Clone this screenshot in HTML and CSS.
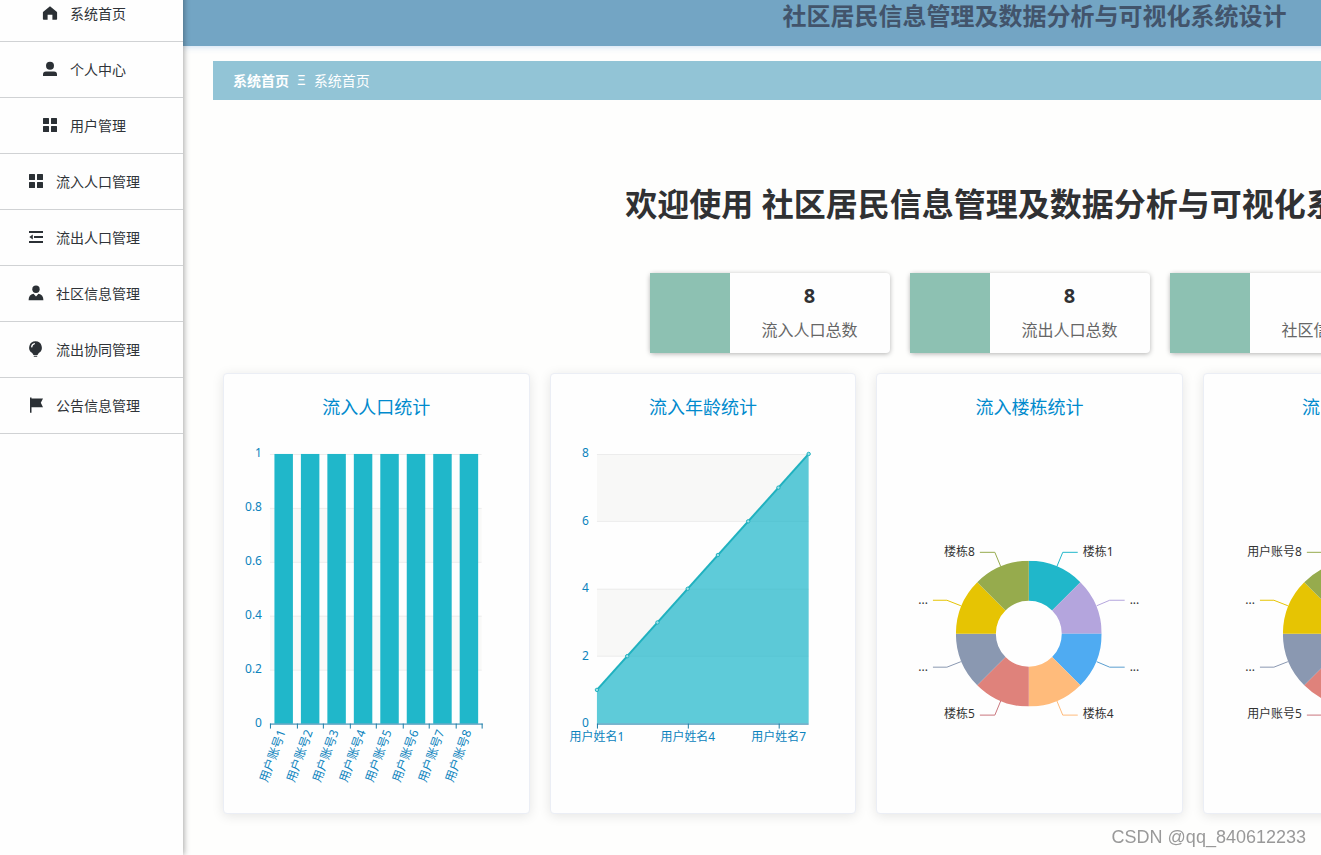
FILE: index.html
```html
<!DOCTYPE html>
<html lang="zh-CN">
<head>
<meta charset="utf-8">
<title>社区居民信息管理及数据分析与可视化系统设计</title>
<link rel="stylesheet" href="styles.css">
</head>
<body>
<svg class="defs" aria-hidden="true">
  <symbol id="i-grid" viewBox="0 0 16 16"><path d="M1.6 1h4.8q.6 0 .6.6v4.8q0 .6-.6.6H1.600q-.6 0-.6-.6V1.600q0-.6.6-.6zM9.600 1h4.800q.6 0 .6.6v4.800q0 .6-.6.6H9.600q-.6 0-.6-.6V1.600q0-.6.6-.6zM1.600 9h4.800q.6 0 .6.6v4.800q0 .6-.6.6H1.600q-.6 0-.6-.6V9.600q0-.6.6-.6zM9.600 9h4.800q.6 0 .6.6v4.800q0 .6-.6.6H9.600q-.6 0-.6-.6V9.600q0-.6.6-.6z"/></symbol>
  <symbol id="donut" viewBox="0 0 146 146">
    <path fill="#20b7ca" d="M73 0A73 73 0 0 1 124.620 21.380L96.330 49.670A33 33 0 0 0 73 40z"/>
    <path fill="#b4a5dd" d="M124.620 21.380A73 73 0 0 1 146 73L106 73A33 33 0 0 0 96.330 49.670z"/>
    <path fill="#4fabf2" d="M146 73A73 73 0 0 1 124.620 124.620L96.330 96.330A33 33 0 0 0 106 73z"/>
    <path fill="#ffbb7b" d="M124.620 124.620A73 73 0 0 1 73 146L73 106A33 33 0 0 0 96.330 96.330z"/>
    <path fill="#df827b" d="M73 146A73 73 0 0 1 21.380 124.620L49.670 96.330A33 33 0 0 0 73 106z"/>
    <path fill="#8a98b1" d="M21.380 124.620A73 73 0 0 1 0 73L40 73A33 33 0 0 0 49.670 96.330z"/>
    <path fill="#e6c403" d="M0 73A73 73 0 0 1 21.380 21.380L49.670 49.670A33 33 0 0 0 40 73z"/>
    <path fill="#96ab4d" d="M21.380 21.380A73 73 0 0 1 73 0L73 40A33 33 0 0 0 49.670 49.670z"/>
  </symbol>
  <symbol id="leaders" viewBox="0 0 305 394">
    <g fill="none">
      <path stroke="#20b7ca" d="M180 147l6-14.500h15"/>
      <path stroke="#b4a5dd" d="M220 186l13-5.500h15"/>
      <path stroke="#5a9fd0" d="M220 242l13 5.500h15"/>
      <path stroke="#ffbb7b" d="M180 281l6 14.500h15"/>
      <path stroke="#c9757c" d="M124 281l-6 14.500h-15"/>
      <path stroke="#8a98b1" d="M84 242l-14 5.500h-14"/>
      <path stroke="#e6c403" d="M84 186l-14-5.500h-14"/>
      <path stroke="#96ab4d" d="M124 147l-6-14.500h-15"/>
    </g>
  </symbol>
</svg>
<div class="page">
  <nav class="sidebar">
    <ul class="menu">
      <li><a href="#"><svg class="icon" viewBox="0 0 16 16"><path d="M8 1.200L1.300 6.700q-.4.300-.4.900V14q0 .8.800.8h3.900V9.800h4.800v5h3.900q.8 0 .8-.8V7.600q0-.6-.4-.9z"/></svg>系统首页</a></li>
      <li><a href="#"><svg class="icon" viewBox="0 0 16 16"><circle cx="8" cy="4.800" r="4"/><path d="M1 15v-1.500Q1 10.500 4 10.500h8q3 0 3 3V15z"/></svg>个人中心</a></li>
      <li><a href="#"><svg class="icon"><use href="#i-grid"/></svg>用户管理</a></li>
      <li><a href="#"><svg class="icon"><use href="#i-grid"/></svg>流入人口管理</a></li>
      <li><a href="#"><svg class="icon" viewBox="0 0 16 16"><path d="M1 2h14v2H1zM6 7h9v2H6zM1 12h14v2H1zM4.800 5.600v4.800L1.300 8z"/></svg>流出人口管理</a></li>
      <li><a href="#"><svg class="icon" viewBox="0 0 16 16"><circle cx="8" cy="4.200" r="3.700"/><path d="M.6 15.300q0-5.600 4.900-6.500L8 11.600l2.500-2.800q4.900.9 4.900 6.500z"/></svg>社区信息管理</a></li>
      <li><a href="#"><svg class="icon" viewBox="0 0 16 16"><path fill-rule="evenodd" d="M7.500.3A6.300 6.300 0 0 1 10.800 12L9.500 14h-4L4.200 12A6.300 6.300 0 0 1 7.500.3zM6.800 2Q3.200 2.600 3 6.200l1.200.2Q4.500 3.700 7 3.100zM5.800 14.800h3.400v1H5.800z"/></svg>流出协同管理</a></li>
      <li><a href="#"><svg class="icon" viewBox="0 0 16 16"><path d="M2 .5h1.500v1H15L12.800 5.800 15 10.300H3.500v5.400H2z"/></svg>公告信息管理</a></li>
    </ul>
  </nav>
  <div class="body">
    <header class="header">社区居民信息管理及数据分析与可视化系统设计</header>
    <main class="main">
      <nav class="crumbs" aria-label="位置"><a href="#">系统首页</a><span class="sep">Ξ</span><span>系统首页</span></nav>
      <h1 class="welcome">欢迎使用 社区居民信息管理及数据分析与可视化系统设计</h1>
      <section class="stats">
        <div class="stat"><div class="swatch"></div><div class="info"><strong>8</strong><span>流入人口总数</span></div></div>
        <div class="stat"><div class="swatch"></div><div class="info"><strong>8</strong><span>流出人口总数</span></div></div>
        <div class="stat"><div class="swatch"></div><div class="info"><strong>8</strong><span>社区信息总数</span></div></div>
      </section>
      <section class="charts">
        <article class="card">
          <h2>流入人口统计</h2>
          <svg class="chart" viewBox="0 0 305 394">
            <path fill="#f9f9f8" d="M46 88h212v54H46zM46 196h212v54H46z"/>
            <path class="gridline" d="M46 34.500h212M46 88.500h212M46 142.500h212M46 196.500h212M46 250.500h212"/>
            <g fill="#20b7ca">
              <rect x="50.500" y="34" width="18.500" height="270"/><rect x="77" y="34" width="18.500" height="270"/><rect x="103.500" y="34" width="18.500" height="270"/><rect x="130" y="34" width="18.500" height="270"/><rect x="156.500" y="34" width="18.500" height="270"/><rect x="183" y="34" width="18.500" height="270"/><rect x="209.500" y="34" width="18.500" height="270"/><rect x="236" y="34" width="18.500" height="270"/>
            </g>
            <path class="axis" d="M46 304.500h213M46.500 304v5M73.500 304v5M99.500 304v5M126.500 304v5M152.500 304v5M179.500 304v5M205.500 304v5M232.500 304v5M258.500 304v5"/>
            <g class="label end"><text x="38" y="37">1</text><text x="38" y="91">0.8</text><text x="38" y="145">0.6</text><text x="38" y="199">0.4</text><text x="38" y="253">0.2</text><text x="38" y="307">0</text></g>
            <g class="label end">
              <text transform="translate(62 312) rotate(-70)">用户账号1</text>
              <text transform="translate(89 312) rotate(-70)">用户账号2</text>
              <text transform="translate(115 312) rotate(-70)">用户账号3</text>
              <text transform="translate(142 312) rotate(-70)">用户账号4</text>
              <text transform="translate(168 312) rotate(-70)">用户账号5</text>
              <text transform="translate(195 312) rotate(-70)">用户账号6</text>
              <text transform="translate(221 312) rotate(-70)">用户账号7</text>
              <text transform="translate(248 312) rotate(-70)">用户账号8</text>
            </g>
          </svg>
        </article>
        <article class="card">
          <h2>流入年龄统计</h2>
          <svg class="chart" viewBox="0 0 305 394">
            <path fill="#f8f8f7" d="M46 34h212v67.500H46zM46 169h212v67.500H46z"/>
            <path class="gridline" d="M46 34.500h212M46 101.500h212M46 169.500h212M46 236.500h212"/>
            <path fill="#20b7ca" fill-opacity=".72" d="M46 270.250L258 34V304H46z"/>
            <path class="axis" d="M46 304.500h212M46.500 304v5M137.500 304v5M228.500 304v5"/>
            <path fill="none" stroke="#20b1bf" stroke-width="2" d="M46 270.250L258 34"/>
            <g class="dots"><circle cx="46" cy="270.250" r="1.700"/><circle cx="76.300" cy="236.500" r="1.700"/><circle cx="106.600" cy="202.750" r="1.700"/><circle cx="136.900" cy="169" r="1.700"/><circle cx="167.100" cy="135.250" r="1.700"/><circle cx="197.400" cy="101.500" r="1.700"/><circle cx="227.700" cy="67.750" r="1.700"/><circle cx="258" cy="34" r="1.700"/></g>
            <g class="label end"><text x="38" y="37">8</text><text x="38" y="105">6</text><text x="38" y="172">4</text><text x="38" y="240">2</text><text x="38" y="307">0</text></g>
            <g class="label middle"><text x="46" y="321">用户姓名1</text><text x="137" y="321">用户姓名4</text><text x="228" y="321">用户姓名7</text></g>
          </svg>
        </article>
        <article class="card">
          <h2>流入楼栋统计</h2>
          <svg class="chart" viewBox="0 0 305 394">
            <use href="#donut" x="79" y="141" width="146" height="146"/>
            <use href="#leaders" width="305" height="394"/>
            <g class="label dark"><text x="206" y="136">楼栋1</text><text x="206" y="298">楼栋4</text><text x="253" y="184">...</text><text x="253" y="251">...</text></g>
            <g class="label dark end"><text x="98" y="136">楼栋8</text><text x="98" y="298">楼栋5</text><text x="51" y="184">...</text><text x="51" y="251">...</text></g>
          </svg>
        </article>
        <article class="card">
          <h2>流出人口统计</h2>
          <svg class="chart" viewBox="0 0 305 394">
            <use href="#donut" x="79" y="141" width="146" height="146"/>
            <use href="#leaders" width="305" height="394"/>
            <g class="label dark end"><text x="98" y="136">用户账号8</text><text x="98" y="298">用户账号5</text><text x="51" y="184">...</text><text x="51" y="251">...</text></g>
          </svg>
        </article>
      </section>
    </main>
  </div>
</div>
<div class="watermark">CSDN @qq_840612233</div>
</body>
</html>
```

FILE: styles.css
```css
* { box-sizing: border-box; }

body {
  margin: 0;
  overflow: hidden;
  background: #fefefd;
  color: #303133;
  font-family: "Noto Sans", "Noto Sans CJK SC", sans-serif;
  font-size: 14px;
}

a { color: inherit; text-decoration: none; }
.defs { display: block; width: 0; height: 0; }

/* Dashboard canvas: wider than small windows, scrolled past its first rows */
.page {
  display: flex;
  min-width: 1886px;
  min-height: calc(100vh + 14px);
  margin-top: -14px;
}

.sidebar {
  position: relative;
  z-index: 1;
  flex: none;
  width: 183px;
  background: #fefefe;
  box-shadow: 1px 0 6px rgba(0, 0, 0, .35);
}
.menu { margin: 0; padding: 0; list-style: none; }
.menu a {
  display: flex;
  align-items: center;
  justify-content: center;
  gap: 12px;
  height: 56px;
  padding: 0 15px 1px 0;
  border-bottom: 1px solid #d0d2d4;
  color: #2f3338;
}
.icon { width: 16px; height: 16px; fill: #2b3035; }

.body { flex: 1; min-width: 0; }
.header {
  height: 60px;
  background: #73a5c4;
  box-shadow: 0 1px 6px rgba(80, 150, 220, .3);
  color: #42546b;
  font-size: 24px;
  font-weight: 700;
  line-height: 60px;
  text-align: center;
}
.main { padding: 15px 40px 30px 30px; }

.crumbs {
  display: flex;
  align-items: center;
  height: 39px;
  padding: 0 20px 2px;
  background: #92c4d6;
  color: #fff;
}
.crumbs a { font-weight: 700; }
.sep { margin: 0 8px; }

.welcome {
  margin: 80px 0 45px;
  font-size: 32px;
  line-height: 48px;
  text-align: center;
}

.stats { display: flex; justify-content: center; gap: 20px; margin-bottom: 20px; }
.stat {
  display: flex;
  width: 240px;
  height: 80px;
  border-radius: 4px;
  background: #fefefe;
  box-shadow: 0 1px 5px rgba(0, 0, 0, .3);
}
.swatch { width: 80px; background: #8dc1b2; }
.info {
  display: flex;
  flex: 1;
  flex-direction: column;
  align-items: center;
  justify-content: center;
  gap: 4px;
}
.info strong { font-size: 20px; line-height: 30px; }
.info span { color: #666; font-size: 16px; line-height: 30px; }

.charts { display: grid; grid-template-columns: repeat(5, 1fr); gap: 20px; padding: 0 10px; }
.card {
  padding-top: 20px;
  border: 1px solid #ebeef5;
  border-radius: 4px;
  background: #fefefe;
  box-shadow: 0 2px 12px rgba(0, 0, 0, .1);
}
.card h2 {
  margin: 0;
  color: #008acd;
  font-size: 18px;
  font-weight: 400;
  line-height: 26px;
  text-align: center;
}
.chart { display: block; width: 100%; }
.gridline { fill: none; stroke: #ececec; }
.axis { fill: none; stroke: #1b7ba8; }
.dots { fill: #9fe0e8; stroke: #20b1bf; }
.label { fill: #0c83bd; font-size: 12px; }
.dark { fill: #333; }
.end { text-anchor: end; }
.middle { text-anchor: middle; }

.watermark {
  position: fixed;
  right: 15px;
  bottom: 6px;
  color: #999;
  font-family: "Liberation Sans", sans-serif;
  font-size: 18px;
  line-height: 24px;
}
```
